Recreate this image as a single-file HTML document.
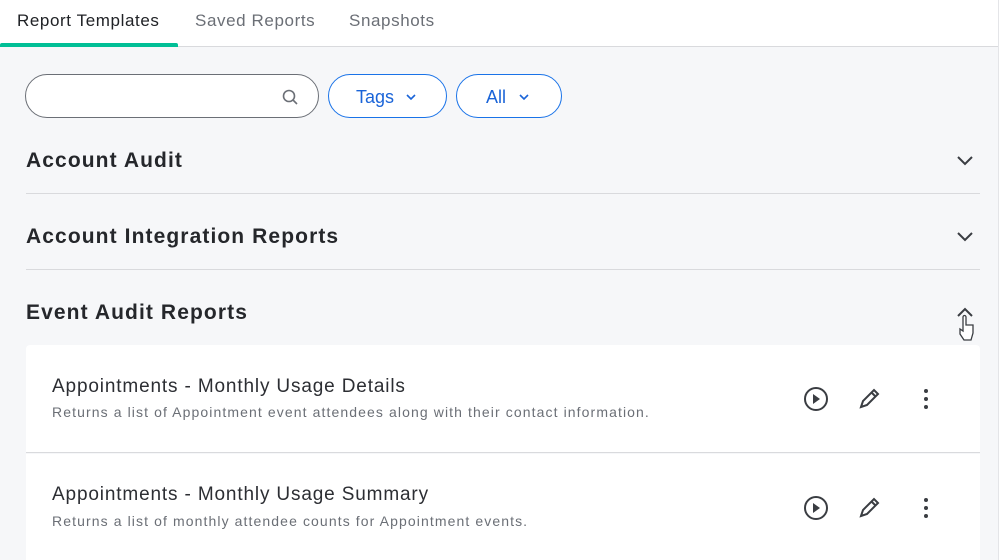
<!DOCTYPE html>
<html><head><style>
*{box-sizing:border-box;margin:0;padding:0}
body{width:999px;height:560px;overflow:hidden;font-family:"Liberation Sans",sans-serif;background:#f6f7f9;position:relative}
.top{position:absolute;left:0;top:0;width:998px;height:47px;background:#fff;border-bottom:1px solid #d9dadd}
.tab{position:absolute;top:11px;font-size:17px;color:#6b6f76;letter-spacing:.6px}
.ul{position:absolute;left:0;top:43px;width:178px;height:4px;background:#00bf96;border-radius:2px 2px 0 0}
.rb{position:absolute;left:998px;top:0;width:1px;height:560px;background:#e4e5e8}
.pill{position:absolute;top:74px;height:44px;border-radius:22px;background:#fff}
.sec{position:absolute;left:26px;font-size:21px;color:#25272b;font-weight:bold;letter-spacing:1.1px}
.hr{position:absolute;left:26px;width:954px;height:1px;background:#d9dadd}
.card{position:absolute;left:26px;width:954px;background:#fff}
.t{position:absolute;left:26px;font-size:19px;color:#2c2e33;letter-spacing:.85px}
.d{position:absolute;left:26px;font-size:14px;color:#6b6f76;letter-spacing:1.1px}
</style></head><body>
<div class="top">
<div class="tab" style="left:17px;color:#202226">Report Templates</div>
<div class="tab" style="left:195px">Saved Reports</div>
<div class="tab" style="left:349px">Snapshots</div>
<div class="ul"></div>
</div>
<div class="rb"></div>
<div class="pill" style="left:25px;width:294px;border:1px solid #6b6f76">
<svg style="position:absolute;left:255px;top:13px" width="18" height="18" viewBox="0 0 18 18" fill="none" stroke="#6b6f76" stroke-width="1.6"><circle cx="8" cy="8" r="5.5"/><path d="M12 12l4 4"/></svg></div>
<div class="pill" style="left:328px;width:119px;border:1px solid #1a73e8;color:#1a64d8;font-size:18px;padding:12px 0 0 27px">Tags<svg style="position:absolute;left:76px;top:18px" width="12" height="8" viewBox="0 0 12 8" fill="none" stroke="#1a64d8" stroke-width="1.6"><path d="M2 2l4 4 4-4"/></svg></div>
<div class="pill" style="left:456px;width:106px;border:1px solid #1a73e8;color:#1a64d8;font-size:18px;padding:12px 0 0 29px">All<svg style="position:absolute;left:61px;top:18px" width="12" height="8" viewBox="0 0 12 8" fill="none" stroke="#1a64d8" stroke-width="1.6"><path d="M2 2l4 4 4-4"/></svg></div>

<div class="sec" style="top:149px">Account Audit</div>
<svg style="position:absolute;left:956px;top:154px" width="18" height="12" viewBox="0 0 18 12" fill="none" stroke="#3a3d42" stroke-width="2"><path d="M2 3l7 7 7-7"/></svg>
<div class="hr" style="top:193px"></div>
<div class="sec" style="top:225px">Account Integration Reports</div>
<svg style="position:absolute;left:956px;top:230px" width="18" height="12" viewBox="0 0 18 12" fill="none" stroke="#3a3d42" stroke-width="2"><path d="M2 3l7 7 7-7"/></svg>
<div class="hr" style="top:269px"></div>
<div class="sec" style="top:301px">Event Audit Reports</div>
<svg style="position:absolute;left:956px;top:306px" width="20" height="36" viewBox="0 0 20 36" fill="none" stroke="#3a3d42" stroke-width="2"><path d="M2 10l7-7 7 7"/><path d="M8 34 l-4-6 v-5 l3 2 v-14 a1.5 1.5 0 0 1 3 0 v8 h7 v8 l-2 7z" fill="#fff" stroke-width="1.3"/></svg>

<div class="card" style="top:345px;height:108px;border-bottom:1px solid #d9dadd;border-radius:4px 4px 0 0">
<div class="t" style="top:31px">Appointments - Monthly Usage Details</div>
<div class="d" style="top:59px">Returns a list of Appointment event attendees along with their contact information.</div>
</div>
<div class="card" style="top:454px;height:106px">
<div class="t" style="top:30px">Appointments - Monthly Usage Summary</div>
<div class="d" style="top:59px">Returns a list of monthly attendee counts for Appointment events.</div>
</div>
<svg style="position:absolute;left:0;top:0" width="999" height="560">
<g fill="none" stroke="#3a3d42" stroke-width="2">
<circle cx="816" cy="399" r="11"/><circle cx="816" cy="508" r="11"/>
<path d="M861 407l2-6 11-11 4 4-11 11z M871 392l4 4"/>
<path d="M861 516l2-6 11-11 4 4-11 11z M871 501l4 4"/>
</g>
<g fill="#3a3d42"><path d="M813 394v10l7-5z"/><path d="M813 503v10l7-5z"/>
<circle cx="926" cy="391" r="2"/><circle cx="926" cy="399" r="2"/><circle cx="926" cy="407" r="2"/>
<circle cx="926" cy="500" r="2"/><circle cx="926" cy="508" r="2"/><circle cx="926" cy="516" r="2"/></g>
</svg>
</body></html>
